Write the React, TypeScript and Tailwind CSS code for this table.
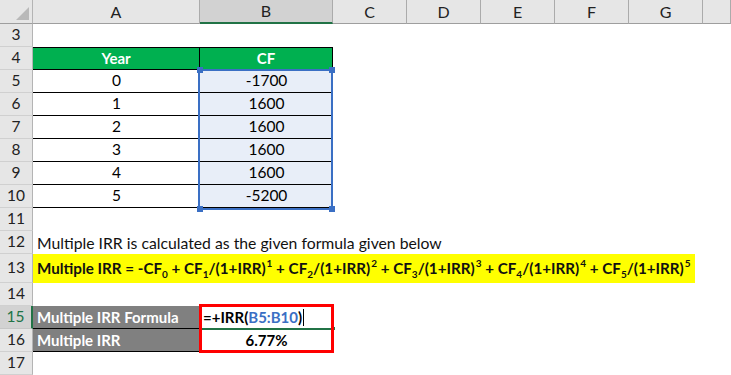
import React from "react";

const colLetters = ["A", "B", "C", "D", "E", "F", "G", ""];

function RowHead({ n, active = false }: { n: number; active?: boolean }) {
  return active ? (
    <div className="flex items-center justify-center bg-[#d2d2d2] border-b border-b-[#c6c6c6] border-r-2 border-r-[#217346] text-[#217346] text-[15.5px]">
      {n}
    </div>
  ) : (
    <div className="flex items-center justify-center bg-[#e6e6e6] border-b border-b-[#d0d0d0] border-r border-r-[#b4b4b4] text-[#222] text-[15.5px]">
      {n}
    </div>
  );
}

function Sup({ c }: { c: string }) {
  return <span className="relative -top-[7px] text-[10px] leading-none ml-[1px]">{c}</span>;
}
function Sub({ c }: { c: string }) {
  return <span className="relative top-[4px] text-[10px] leading-none">{c}</span>;
}

export default function App() {
  const data: [string, string][] = [
    ["0", "-1700"],
    ["1", "1600"],
    ["2", "1600"],
    ["3", "1600"],
    ["4", "1600"],
    ["5", "-5200"],
  ];

  return (
    <div className="relative w-[731px] h-[375px] overflow-hidden bg-white [font-family:Lato,'Noto_Sans',sans-serif] text-[15px] text-black">
      <div className="grid grid-cols-[33px_167px_133px_74px_74px_74px_74px_74px_28px] grid-rows-[24px_repeat(10,23px)_29px_repeat(4,23px)]">
        {/* header row */}
        <div className="relative bg-[#e6e6e6] border-r border-r-[#b4b4b4] border-b border-b-[#9e9e9e]">
          <svg className="absolute right-[3px] bottom-[3px]" width="13" height="13" viewBox="0 0 13 13">
            <polygon points="13,0 13,13 0,13" fill="#b9b9b9" />
          </svg>
        </div>
        {colLetters.map((c) =>
          c === "B" ? (
            <div
              key={c}
              className="flex items-center justify-center bg-[#d2d2d2] border-r border-r-[#ababab] border-b-2 border-b-[#217346] text-[#222] text-[16px]"
            >
              {c}
            </div>
          ) : (
            <div
              key={c || "x"}
              className="flex items-center justify-center bg-[#e6e6e6] border-r border-r-[#ababab] border-b border-b-[#9e9e9e] text-[#222] text-[16px]"
            >
              {c}
            </div>
          )
        )}

        {/* row 3 */}
        <RowHead n={3} />
        <div className="col-span-8" />

        {/* row 4 */}
        <RowHead n={4} />
        <div className="flex items-center justify-center bg-[#00b050] border-t border-b border-r border-black text-white font-bold">
          Year
        </div>
        <div className="flex items-center justify-center bg-[#00b050] border-t border-b border-r border-black text-white font-bold">
          CF
        </div>
        <div className="col-span-6" />

        {/* rows 5-10 */}
        {data.map(([y, cf], i) => (
          <React.Fragment key={y}>
            <RowHead n={5 + i} />
            <div className="flex items-center justify-center border-b border-black text-[15.5px]">{y}</div>
            <div className="flex items-center justify-center bg-[#e8eef8] border-b border-black text-[15.5px]">{cf}</div>
            <div className="col-span-6" />
          </React.Fragment>
        ))}

        {/* row 11 */}
        <RowHead n={11} />
        <div className="col-span-8" />

        {/* row 12 */}
        <RowHead n={12} />
        <div className="col-span-8 flex items-center pl-[4px] whitespace-nowrap text-[#111] text-[15.75px]">
          <span>Multiple IRR is calculated as the given formula given below</span>
        </div>

        {/* row 13 */}
        <RowHead n={13} />
        <div className="col-span-8 flex items-stretch">
          <div className="w-[662px] bg-[#ffff00] flex items-center pl-[4px] font-bold whitespace-nowrap text-[#111] text-[15.2px]">
            <span>
              Multiple IRR = -CF<Sub c="0" /> + CF<Sub c="1" />/(1+IRR)<Sup c="1" /> + CF<Sub c="2" />/(1+IRR)
              <Sup c="2" /> + CF<Sub c="3" />/(1+IRR)<Sup c="3" /> + CF<Sub c="4" />/(1+IRR)<Sup c="4" /> + CF
              <Sub c="5" />/(1+IRR)<Sup c="5" />
            </span>
          </div>
        </div>

        {/* row 14 */}
        <RowHead n={14} />
        <div className="col-span-8" />

        {/* row 15 */}
        <RowHead n={15} active />
        <div className="flex items-center pl-[4px] bg-[#808080] border-b border-black text-white font-bold whitespace-nowrap">
          <span>Multiple IRR Formula</span>
        </div>
        <div className="flex items-center pl-[3px] font-bold whitespace-nowrap">
          <span>=+IRR(</span>
          <span className="text-[#3a6fc4]">B5:B10</span>
          <span>)</span>
          <span className="ml-[1px] w-[1px] h-[17px] bg-black" />
        </div>
        <div className="col-span-6" />

        {/* row 16 */}
        <RowHead n={16} />
        <div className="flex items-center pl-[4px] bg-[#808080] border-b border-black text-white font-bold">
          <span>Multiple IRR</span>
        </div>
        <div className="flex items-center justify-center font-bold">6.77%</div>
        <div className="col-span-6" />

        {/* row 17 */}
        <RowHead n={17} />
        <div className="col-span-8" />
      </div>

      {/* reference range highlight B5:B10 */}
      <div className="absolute left-[198px] top-[69px] w-[135px] h-[141px] border-2 border-[#3a6fc4]" />
      <div className="absolute left-[197px] top-[67px] w-[6px] h-[6px] bg-[#3a6fc4]" />
      <div className="absolute left-[329px] top-[67px] w-[6px] h-[6px] bg-[#3a6fc4]" />
      <div className="absolute left-[197px] top-[206px] w-[6px] h-[6px] bg-[#3a6fc4]" />
      <div className="absolute left-[329px] top-[206px] w-[6px] h-[6px] bg-[#3a6fc4]" />

      {/* active cell bottom edge */}
      <div className="absolute left-[200px] top-[328px] w-[134px] h-[2px] bg-[#217346]" />
      <div className="absolute left-[331px] top-[326px] w-[5px] h-[5px] bg-[#217346] border border-white" />

      {/* red annotation box */}
      <div className="absolute left-[199px] top-[304px] w-[135px] h-[49px] border-[3px] border-[#ff0000]" />
    </div>
  );
}
